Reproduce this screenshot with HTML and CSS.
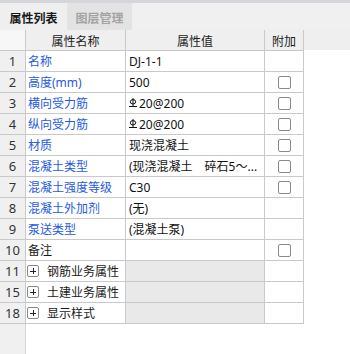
FILE: index.html
```html
<!DOCTYPE html>
<html>
<head>
<meta charset="utf-8">
<link rel="stylesheet" href="styles.css">
</head>
<body>
<div class="panel">
  <div class="topstrip"></div>
  <div class="tabs">
    <div class="tab active">属性列表</div>
    <div class="tab">图层管理</div>
  </div>
  <div class="area">
    <div class="grid">
      <div class="hd corner"></div>
      <div class="hd">属性名称</div>
      <div class="hd">属性值</div>
      <div class="hd">附加</div>

      <div class="num">1</div><div class="name blue">名称</div><div class="val">DJ-1-1</div><div class="ext"></div>
      <div class="num">2</div><div class="name blue">高度(mm)</div><div class="val">500</div><div class="ext"><span class="cb"></span></div>
      <div class="num">3</div><div class="name blue">横向受力筋</div><div class="val"><svg class="rebar" viewBox="0 0 8 9" width="8" height="9"><path d="M4 0V8.5M1.3 3.8a2.7 2.2 0 1 0 5.4 0a2.7 2.2 0 1 0 -5.4 0M0 8.5H8" fill="none" stroke="#111" stroke-width="1"/></svg>20@200</div><div class="ext"><span class="cb"></span></div>
      <div class="num">4</div><div class="name blue">纵向受力筋</div><div class="val"><svg class="rebar" viewBox="0 0 8 9" width="8" height="9"><path d="M4 0V8.5M1.3 3.8a2.7 2.2 0 1 0 5.4 0a2.7 2.2 0 1 0 -5.4 0M0 8.5H8" fill="none" stroke="#111" stroke-width="1"/></svg>20@200</div><div class="ext"><span class="cb"></span></div>
      <div class="num">5</div><div class="name blue">材质</div><div class="val">现浇混凝土</div><div class="ext"><span class="cb"></span></div>
      <div class="num">6</div><div class="name blue">混凝土类型</div><div class="val">(现浇混凝土　碎石5～...</div><div class="ext"><span class="cb"></span></div>
      <div class="num">7</div><div class="name blue">混凝土强度等级</div><div class="val">C30</div><div class="ext"><span class="cb"></span></div>
      <div class="num">8</div><div class="name blue">混凝土外加剂</div><div class="val">(无)</div><div class="ext"></div>
      <div class="num">9</div><div class="name blue">泵送类型</div><div class="val">(混凝土泵)</div><div class="ext"></div>
      <div class="num">10</div><div class="name">备注</div><div class="val"></div><div class="ext"><span class="cb"></span></div>
      <div class="num">11</div><div class="name grp"><span class="plus"></span>钢筋业务属性</div><div class="val gray"></div><div class="ext"></div>
      <div class="num">15</div><div class="name grp"><span class="plus"></span>土建业务属性</div><div class="val gray"></div><div class="ext"></div>
      <div class="num">18</div><div class="name grp"><span class="plus"></span>显示样式</div><div class="val gray"></div><div class="ext"></div>
    </div>
  </div>
</div>
</body>
</html>
```

FILE: styles.css
```css
html, body {
  margin: 0;
  padding: 0;
  background: #ffffff;
}
body {
  font-family: "Noto Sans", "Noto Sans CJK SC", sans-serif;
  font-size: 12px;
  color: #1a1a1a;
}
.panel {
  width: 350px;
  height: 354px;
  display: flex;
  flex-direction: column;
  overflow: hidden;
}
.topstrip {
  height: 3px;
  background: #d5d6db;
}
.tabs {
  height: 27px;
  display: flex;
  background: #f0f0f0;
}
.tab {
  width: 65px;
  display: flex;
  align-items: center;
  justify-content: center;
  font-family: "Noto Sans CJK SC", sans-serif;
  font-weight: bold;
  font-size: 12px;
  color: #a3a3a3;
  background: #e3e3e3;
  padding-top: 1px;
  box-sizing: border-box;
}
.tab.active {
  width: 67px;
  color: #1a1a1a;
  background: #efefef;
}
.area {
  flex: 1;
  background:
    linear-gradient(to bottom, #efefef 20px, transparent 20px),
    linear-gradient(to right, #f0f0f0 25px, #d6d6d6 25px, #d6d6d6 26px, #ffffff 26px);
}
.grid {
  display: grid;
  grid-template-columns: 25px 99px 138px 38px;
  grid-auto-rows: 20px;
  gap: 1px;
  width: max-content;
  background: #c9c9c9;
  padding: 0 1px 1px 0;
}
.grid > div {
  display: flex;
  align-items: center;
  white-space: nowrap;
  overflow: hidden;
}
.hd {
  background: #efefef;
  justify-content: center;
  font-family: "Noto Sans CJK SC", sans-serif;
  color: #222;
}
.hd.corner {
  background: #f7f7f7;
}
.num {
  background: #f0f0f0;
  justify-content: center;
  font-size: 13px;
  color: #333;
}
.name {
  background: #ffffff;
  padding-left: 2px;
  font-family: "Noto Sans", "Noto Sans CJK SC", sans-serif;
}
.name.blue {
  color: #1f5ae2;
}
.name.grp {
  padding-left: 1px;
}
.val {
  background: #ffffff;
  padding-left: 3px;
  color: #111;
}
.val.gray {
  background: #e9e9e9;
}
.ext {
  background: #ffffff;
  justify-content: center;
}
.cb {
  width: 11px;
  height: 11px;
  border: 1px solid #8a8a8a;
  border-radius: 2px;
  background: #fff;
}
.rebar {
  margin-right: 2px;
  margin-top: -2px;
  flex: none;
}
.plus {
  position: relative;
  width: 10px;
  height: 10px;
  border: 1px solid #8a8a8a;
  border-radius: 2px;
  margin-right: 8px;
  flex: none;
}
.plus::before,
.plus::after {
  content: "";
  position: absolute;
  background: #222;
}
.plus::before {
  left: 2px;
  top: 4.5px;
  width: 6px;
  height: 1px;
}
.plus::after {
  left: 4.5px;
  top: 2px;
  width: 1px;
  height: 6px;
}
```
